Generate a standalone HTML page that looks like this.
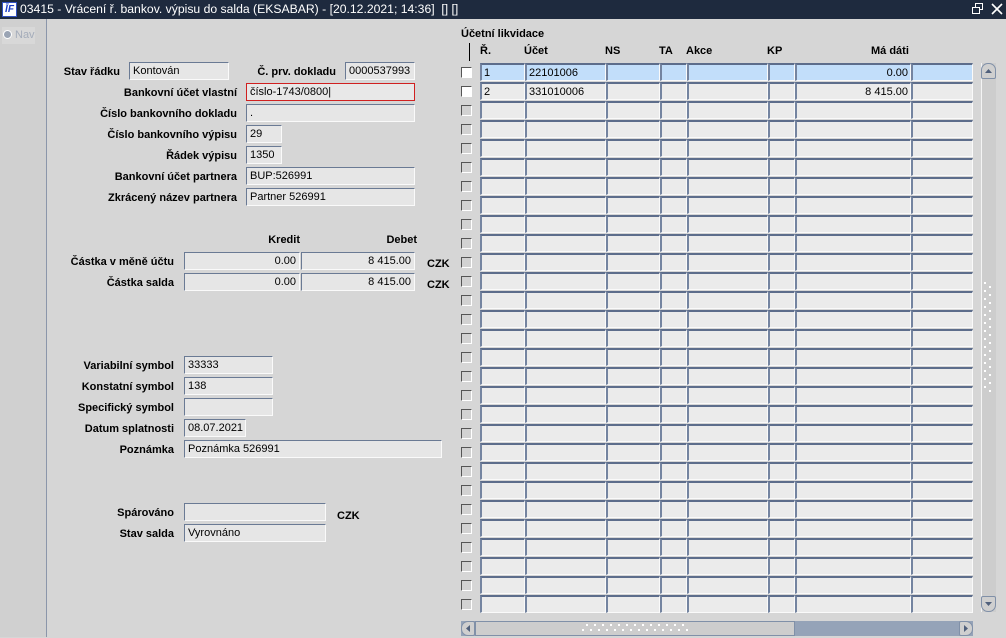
<!DOCTYPE html>
<html><head><meta charset="utf-8">
<style>
*{box-sizing:border-box;margin:0;padding:0}
body{width:1006px;height:637px;overflow:hidden;background:#d6d6d6;font-family:"Liberation Sans",Arial,sans-serif;font-size:11px;color:#000;position:relative}
.a{position:absolute}
#tb{left:0;top:0;width:1006px;height:19px;background:#1e2a3e;color:#fff;font-size:12.2px;line-height:19px;padding-left:20px;white-space:nowrap}
#logo{left:2px;top:2px;width:15px;height:15px;background:#fff;border:1px solid #3050c0;color:#1a3cc8;font:italic bold 10px/13px "Liberation Sans",sans-serif;text-align:center}
#side{left:0;top:19px;width:47px;height:618px;background:#d0d0d0;border-right:1px solid #8b96aa}
.l{position:absolute;font-weight:bold;text-align:right;white-space:nowrap;line-height:14px}
.f{position:absolute;background:#e6e6e6;border-top:1px solid #6a7a94;border-left:1px solid #6a7a94;border-bottom:1px solid #fafafa;border-right:1px solid #fafafa;height:18px;line-height:17px;padding:0 3px;white-space:nowrap;overflow:hidden}
.r{text-align:right}
.h{position:absolute;font-weight:bold;top:44px;line-height:14px}
.row{position:absolute;left:461px;height:19px;width:512px}
.row .cb{position:absolute;left:0;top:4px;width:11px;height:11px;background:#d2d2d2;border-top:1px solid #555;border-left:1px solid #555;border-bottom:1px solid #fff;border-right:1px solid #fff}
.row .c{position:absolute;top:0;height:18px;background:#ebebeb;border-top:2px solid #5d6d8b;border-left:2px solid #7484a0;border-bottom:1px solid #fafafa;border-right:1px solid #fafafa;line-height:16px;padding:0 2px;white-space:nowrap;overflow:hidden}
.sel .c{background:#c2defa}
.w .cb{background:#fff}
.c1{left:19px;width:45px}.c2{left:64px;width:81px}.c3{left:145px;width:54px}.c4{left:199px;width:27px}.c5{left:226px;width:81px}.c6{left:307px;width:27px}.c7{left:334px;width:116px}.c8{left:450px;width:62px}
</style></head><body>
<div id="tb" class="a">03415 - Vrácení ř. bankov. výpisu do salda (EKSABAR) - [20.12.2021; 14:36]&nbsp; [] []</div>
<div id="logo" class="a">ĪF</div>
<div class="a" style="left:972px;top:3px;width:11px;height:11px">
<svg width="11" height="11"><rect x="3.5" y="0.5" width="7" height="6" fill="none" stroke="#fff"/><rect x="0.5" y="4.5" width="7" height="6" fill="#1e2a3e" stroke="#fff"/></svg></div>
<div class="a" style="left:991px;top:3px;width:12px;height:12px"><svg width="12" height="12"><path d="M1 1L11 11M11 1L1 11" stroke="#fff" stroke-width="1.6"/></svg></div>
<div id="side" class="a"></div>
<div class="a" style="left:2px;top:27px;width:33px;height:17px;background:#d8d8d8"></div>
<div class="a" style="left:3px;top:30px;width:9px;height:9px;border-radius:50%;background:#9aa4b4;border:1px solid #fff"></div>
<div class="a" style="left:15px;top:29px;color:#a4acba;font-size:11px">Nav</div>

<div class="l" style="right:886px;top:65px">Stav řádku</div>
<div class="f" style="left:129px;top:62px;width:100px">Kontován</div>
<div class="l" style="right:670px;top:65px">Č. prv. dokladu</div>
<div class="f" style="left:345px;top:62px;width:70px">0000537993</div>
<div class="l" style="right:769px;top:86px">Bankovní účet vlastní</div>
<div class="f" style="left:246px;top:83px;width:169px;border:1px solid #d02020;background:#e8e8e8">číslo-1743/0800|</div>
<div class="l" style="right:769px;top:107px">Číslo bankovního dokladu</div>
<div class="f" style="left:246px;top:104px;width:169px">.</div>
<div class="l" style="right:769px;top:128px">Číslo bankovního výpisu</div>
<div class="f" style="left:246px;top:125px;width:36px">29</div>
<div class="l" style="right:769px;top:149px">Řádek výpisu</div>
<div class="f" style="left:246px;top:146px;width:36px">1350</div>
<div class="l" style="right:769px;top:170px">Bankovní účet partnera</div>
<div class="f" style="left:246px;top:167px;width:169px">BUP:526991</div>
<div class="l" style="right:769px;top:191px">Zkrácený název partnera</div>
<div class="f" style="left:246px;top:188px;width:169px">Partner 526991</div>

<div class="l" style="right:706px;top:233px">Kredit</div>
<div class="l" style="right:589px;top:233px">Debet</div>
<div class="l" style="right:832px;top:255px">Částka v měně účtu</div>
<div class="f r" style="left:184px;top:252px;width:116px">0.00</div>
<div class="f r" style="left:301px;top:252px;width:114px">8 415.00</div>
<div class="l" style="left:427px;top:257px">CZK</div>
<div class="l" style="right:832px;top:276px">Částka salda</div>
<div class="f r" style="left:184px;top:273px;width:116px">0.00</div>
<div class="f r" style="left:301px;top:273px;width:114px">8 415.00</div>
<div class="l" style="left:427px;top:278px">CZK</div>

<div class="l" style="right:832px;top:359px">Variabilní symbol</div>
<div class="f" style="left:184px;top:356px;width:89px">33333</div>
<div class="l" style="right:832px;top:380px">Konstatní symbol</div>
<div class="f" style="left:184px;top:377px;width:89px">138</div>
<div class="l" style="right:832px;top:401px">Specifický symbol</div>
<div class="f" style="left:184px;top:398px;width:89px"></div>
<div class="l" style="right:832px;top:422px">Datum splatnosti</div>
<div class="f" style="left:184px;top:419px;width:62px">08.07.2021</div>
<div class="l" style="right:832px;top:443px">Poznámka</div>
<div class="f" style="left:184px;top:440px;width:258px">Poznámka 526991</div>
<div class="l" style="right:832px;top:506px">Spárováno</div>
<div class="f" style="left:184px;top:503px;width:142px"></div>
<div class="l" style="left:337px;top:509px">CZK</div>
<div class="l" style="right:832px;top:527px">Stav salda</div>
<div class="f" style="left:184px;top:524px;width:142px">Vyrovnáno</div>

<div class="h" style="left:461px;top:27px">Účetní likvidace</div>
<div class="a" style="left:469px;top:43px;width:1px;height:18px;background:#000"></div>
<div class="h" style="left:480px">Ř.</div>
<div class="h" style="left:524px">Účet</div>
<div class="h" style="left:605px">NS</div>
<div class="h" style="left:659px">TA</div>
<div class="h" style="left:686px">Akce</div>
<div class="h" style="left:767px">KP</div>
<div class="h" style="left:871px">Má dáti</div>

<div class="row sel w" style="top:63px"><div class="cb"></div><div class="c c1">1</div><div class="c c2">22101006</div><div class="c c3"></div><div class="c c4"></div><div class="c c5"></div><div class="c c6"></div><div class="c c7 r">0.00</div><div class="c c8"></div></div>
<div class="row w" style="top:82px"><div class="cb"></div><div class="c c1">2</div><div class="c c2">331010006</div><div class="c c3"></div><div class="c c4"></div><div class="c c5"></div><div class="c c6"></div><div class="c c7 r">8 415.00</div><div class="c c8"></div></div>
<div class="row" style="top:101px"><div class="cb"></div><div class="c c1"></div><div class="c c2"></div><div class="c c3"></div><div class="c c4"></div><div class="c c5"></div><div class="c c6"></div><div class="c c7"></div><div class="c c8"></div></div>
<div class="row" style="top:120px"><div class="cb"></div><div class="c c1"></div><div class="c c2"></div><div class="c c3"></div><div class="c c4"></div><div class="c c5"></div><div class="c c6"></div><div class="c c7"></div><div class="c c8"></div></div>
<div class="row" style="top:139px"><div class="cb"></div><div class="c c1"></div><div class="c c2"></div><div class="c c3"></div><div class="c c4"></div><div class="c c5"></div><div class="c c6"></div><div class="c c7"></div><div class="c c8"></div></div>
<div class="row" style="top:158px"><div class="cb"></div><div class="c c1"></div><div class="c c2"></div><div class="c c3"></div><div class="c c4"></div><div class="c c5"></div><div class="c c6"></div><div class="c c7"></div><div class="c c8"></div></div>
<div class="row" style="top:177px"><div class="cb"></div><div class="c c1"></div><div class="c c2"></div><div class="c c3"></div><div class="c c4"></div><div class="c c5"></div><div class="c c6"></div><div class="c c7"></div><div class="c c8"></div></div>
<div class="row" style="top:196px"><div class="cb"></div><div class="c c1"></div><div class="c c2"></div><div class="c c3"></div><div class="c c4"></div><div class="c c5"></div><div class="c c6"></div><div class="c c7"></div><div class="c c8"></div></div>
<div class="row" style="top:215px"><div class="cb"></div><div class="c c1"></div><div class="c c2"></div><div class="c c3"></div><div class="c c4"></div><div class="c c5"></div><div class="c c6"></div><div class="c c7"></div><div class="c c8"></div></div>
<div class="row" style="top:234px"><div class="cb"></div><div class="c c1"></div><div class="c c2"></div><div class="c c3"></div><div class="c c4"></div><div class="c c5"></div><div class="c c6"></div><div class="c c7"></div><div class="c c8"></div></div>
<div class="row" style="top:253px"><div class="cb"></div><div class="c c1"></div><div class="c c2"></div><div class="c c3"></div><div class="c c4"></div><div class="c c5"></div><div class="c c6"></div><div class="c c7"></div><div class="c c8"></div></div>
<div class="row" style="top:272px"><div class="cb"></div><div class="c c1"></div><div class="c c2"></div><div class="c c3"></div><div class="c c4"></div><div class="c c5"></div><div class="c c6"></div><div class="c c7"></div><div class="c c8"></div></div>
<div class="row" style="top:291px"><div class="cb"></div><div class="c c1"></div><div class="c c2"></div><div class="c c3"></div><div class="c c4"></div><div class="c c5"></div><div class="c c6"></div><div class="c c7"></div><div class="c c8"></div></div>
<div class="row" style="top:310px"><div class="cb"></div><div class="c c1"></div><div class="c c2"></div><div class="c c3"></div><div class="c c4"></div><div class="c c5"></div><div class="c c6"></div><div class="c c7"></div><div class="c c8"></div></div>
<div class="row" style="top:329px"><div class="cb"></div><div class="c c1"></div><div class="c c2"></div><div class="c c3"></div><div class="c c4"></div><div class="c c5"></div><div class="c c6"></div><div class="c c7"></div><div class="c c8"></div></div>
<div class="row" style="top:348px"><div class="cb"></div><div class="c c1"></div><div class="c c2"></div><div class="c c3"></div><div class="c c4"></div><div class="c c5"></div><div class="c c6"></div><div class="c c7"></div><div class="c c8"></div></div>
<div class="row" style="top:367px"><div class="cb"></div><div class="c c1"></div><div class="c c2"></div><div class="c c3"></div><div class="c c4"></div><div class="c c5"></div><div class="c c6"></div><div class="c c7"></div><div class="c c8"></div></div>
<div class="row" style="top:386px"><div class="cb"></div><div class="c c1"></div><div class="c c2"></div><div class="c c3"></div><div class="c c4"></div><div class="c c5"></div><div class="c c6"></div><div class="c c7"></div><div class="c c8"></div></div>
<div class="row" style="top:405px"><div class="cb"></div><div class="c c1"></div><div class="c c2"></div><div class="c c3"></div><div class="c c4"></div><div class="c c5"></div><div class="c c6"></div><div class="c c7"></div><div class="c c8"></div></div>
<div class="row" style="top:424px"><div class="cb"></div><div class="c c1"></div><div class="c c2"></div><div class="c c3"></div><div class="c c4"></div><div class="c c5"></div><div class="c c6"></div><div class="c c7"></div><div class="c c8"></div></div>
<div class="row" style="top:443px"><div class="cb"></div><div class="c c1"></div><div class="c c2"></div><div class="c c3"></div><div class="c c4"></div><div class="c c5"></div><div class="c c6"></div><div class="c c7"></div><div class="c c8"></div></div>
<div class="row" style="top:462px"><div class="cb"></div><div class="c c1"></div><div class="c c2"></div><div class="c c3"></div><div class="c c4"></div><div class="c c5"></div><div class="c c6"></div><div class="c c7"></div><div class="c c8"></div></div>
<div class="row" style="top:481px"><div class="cb"></div><div class="c c1"></div><div class="c c2"></div><div class="c c3"></div><div class="c c4"></div><div class="c c5"></div><div class="c c6"></div><div class="c c7"></div><div class="c c8"></div></div>
<div class="row" style="top:500px"><div class="cb"></div><div class="c c1"></div><div class="c c2"></div><div class="c c3"></div><div class="c c4"></div><div class="c c5"></div><div class="c c6"></div><div class="c c7"></div><div class="c c8"></div></div>
<div class="row" style="top:519px"><div class="cb"></div><div class="c c1"></div><div class="c c2"></div><div class="c c3"></div><div class="c c4"></div><div class="c c5"></div><div class="c c6"></div><div class="c c7"></div><div class="c c8"></div></div>
<div class="row" style="top:538px"><div class="cb"></div><div class="c c1"></div><div class="c c2"></div><div class="c c3"></div><div class="c c4"></div><div class="c c5"></div><div class="c c6"></div><div class="c c7"></div><div class="c c8"></div></div>
<div class="row" style="top:557px"><div class="cb"></div><div class="c c1"></div><div class="c c2"></div><div class="c c3"></div><div class="c c4"></div><div class="c c5"></div><div class="c c6"></div><div class="c c7"></div><div class="c c8"></div></div>
<div class="row" style="top:576px"><div class="cb"></div><div class="c c1"></div><div class="c c2"></div><div class="c c3"></div><div class="c c4"></div><div class="c c5"></div><div class="c c6"></div><div class="c c7"></div><div class="c c8"></div></div>
<div class="row" style="top:595px"><div class="cb"></div><div class="c c1"></div><div class="c c2"></div><div class="c c3"></div><div class="c c4"></div><div class="c c5"></div><div class="c c6"></div><div class="c c7"></div><div class="c c8"></div></div>

<!-- vertical scrollbar -->
<div class="a" style="left:981px;top:63px;width:15px;height:549px;background:#cdcdcd;border-left:1px solid #f4f4f4"></div>
<div class="a" style="left:981px;top:63px;width:15px;height:16px;background:#cfcfcf;border:1px solid #8090a8;border-radius:7px 7px 2px 2px"><svg width="13" height="14"><path d="M3 9L6.5 5L10 9Z" fill="#50607c"/></svg></div>
<div class="a" style="left:981px;top:596px;width:15px;height:16px;background:#cfcfcf;border:1px solid #8090a8;border-radius:2px 2px 7px 7px"><svg width="13" height="14"><path d="M3 5L6.5 9L10 5Z" fill="#50607c"/></svg></div>
<svg class="a" style="left:984px;top:282px" width="10" height="110"><defs><pattern id="vd" width="10" height="8" patternUnits="userSpaceOnUse"><rect x="0" y="0" width="2" height="2" fill="#fff"/><rect x="5" y="4" width="2" height="2" fill="#fff"/></pattern></defs><rect width="10" height="110" fill="url(#vd)"/></svg>
<!-- horizontal scrollbar -->
<div class="a" style="left:461px;top:621px;width:512px;height:15px;background:#95a3b8"></div>
<div class="a" style="left:461px;top:621px;width:14px;height:15px;background:#cfcfcf;border:1px solid #8090a8;border-radius:7px 2px 2px 7px"><svg width="12" height="13"><path d="M8 3L4 6.5L8 10Z" fill="#50607c"/></svg></div>
<div class="a" style="left:475px;top:621px;width:320px;height:15px;background:#cdcdcd;border:1px solid #8090a8"></div>
<svg class="a" style="left:582px;top:624px" width="108" height="10"><defs><pattern id="hd" width="8" height="10" patternUnits="userSpaceOnUse"><rect x="4" y="0" width="2" height="2" fill="#fff"/><rect x="0" y="5" width="2" height="2" fill="#fff"/></pattern></defs><rect width="108" height="10" fill="url(#hd)"/></svg>
<div class="a" style="left:959px;top:621px;width:14px;height:15px;background:#cfcfcf;border:1px solid #8090a8;border-radius:2px 7px 7px 2px"><svg width="12" height="13"><path d="M4 3L8 6.5L4 10Z" fill="#50607c"/></svg></div>
</body></html>
